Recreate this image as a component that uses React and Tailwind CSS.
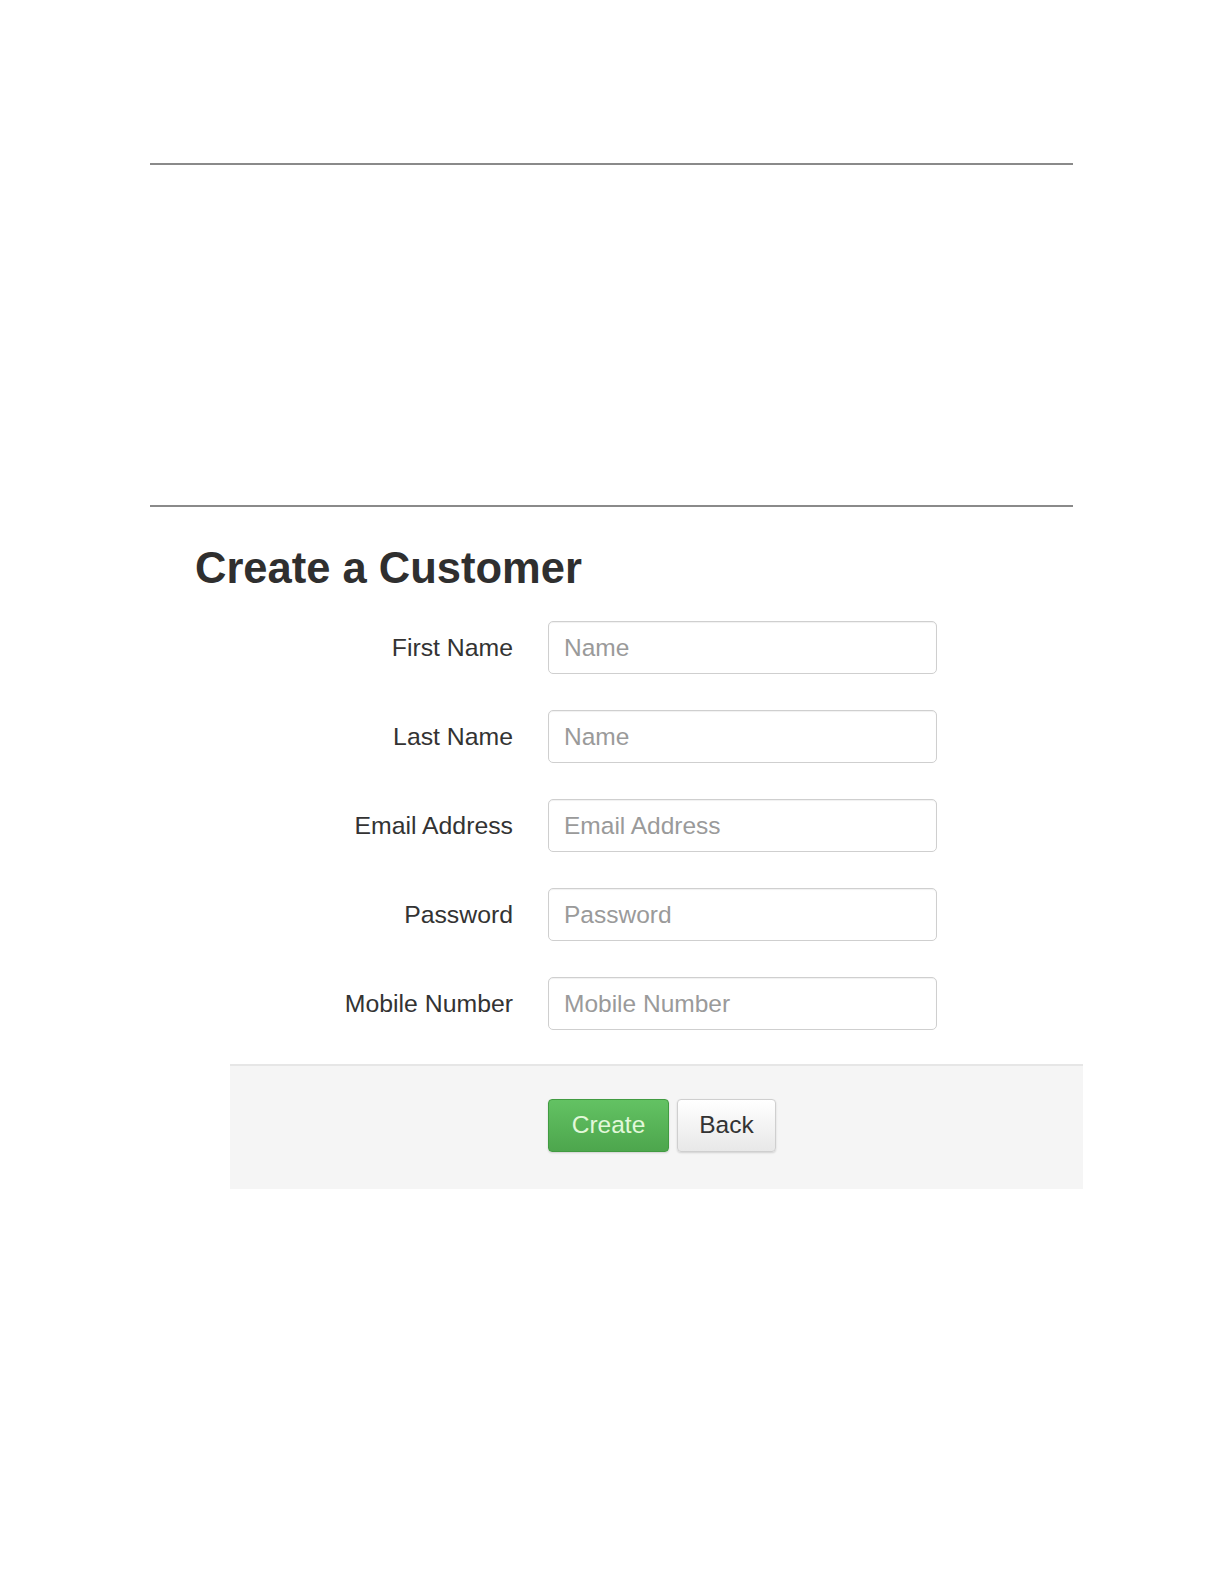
import React from "react";

const fields = [
  { label: "First Name", placeholder: "Name", type: "text" },
  { label: "Last Name", placeholder: "Name", type: "text" },
  { label: "Email Address", placeholder: "Email Address", type: "email" },
  { label: "Password", placeholder: "Password", type: "password" },
  { label: "Mobile Number", placeholder: "Mobile Number", type: "text" },
];

const App = () => {
  return (
    <div
      className="min-h-[1584px] w-full bg-white pt-[163px] text-[#333]"
      style={{ fontFamily: '"Liberation Sans", Arial, sans-serif' }}
    >
      <div className="ml-[150px] w-[923px]">
        <div className="h-[2px] bg-[#8a8a8a]"></div>
        <div className="h-[340px]"></div>
        <div className="h-[2px] bg-[#8a8a8a]"></div>
      </div>

      <h2 className="ml-[195px] mt-[37px] text-[43.5px] font-bold leading-[48px] text-[#2f2f2f]">
        Create a Customer
      </h2>

      <form className="mt-[29px]" onSubmit={(e) => e.preventDefault()}>
        <div className="ml-[230px] flex flex-col gap-[36px]">
          {fields.map((f, i) => (
            <div key={i} className="flex items-center gap-[35px]">
              <label
                htmlFor={`field-${i}`}
                className="w-[283px] text-right text-[24.8px] leading-[28px] text-[#333]"
              >
                {f.label}
              </label>
              <input
                id={`field-${i}`}
                type={f.type}
                placeholder={f.placeholder}
                className="h-[53px] w-[389px] rounded-[5px] border border-[#cfcfcf] bg-white px-[15px] text-[24.5px] text-[#555] shadow-[inset_0_1px_1px_rgba(0,0,0,0.06)] outline-none placeholder:text-[#9a9a9a]"
              />
            </div>
          ))}
        </div>

        <div className="ml-[230px] mt-[34px] flex w-[853px] gap-[8px] border-t-2 border-[#e6e6e6] bg-[#f5f5f5] pb-[37px] pl-[318px] pt-[33px]">
          <button
            type="submit"
            className="h-[53px] w-[121px] rounded-[4px] border border-[#419b41] bg-gradient-to-b from-[#63c263] to-[#4da64d] text-[24.5px] text-[#e2f8da] shadow-[0_1px_2px_rgba(0,0,0,0.15)]"
          >
            Create
          </button>
          <button
            type="button"
            className="h-[53px] w-[99px] rounded-[4px] border border-[#cfcfcf] bg-gradient-to-b from-white to-[#e8e8e8] text-[24.5px] text-[#333] shadow-[0_1px_2px_rgba(0,0,0,0.15)]"
          >
            Back
          </button>
        </div>
      </form>
    </div>
  );
};

export default App;
